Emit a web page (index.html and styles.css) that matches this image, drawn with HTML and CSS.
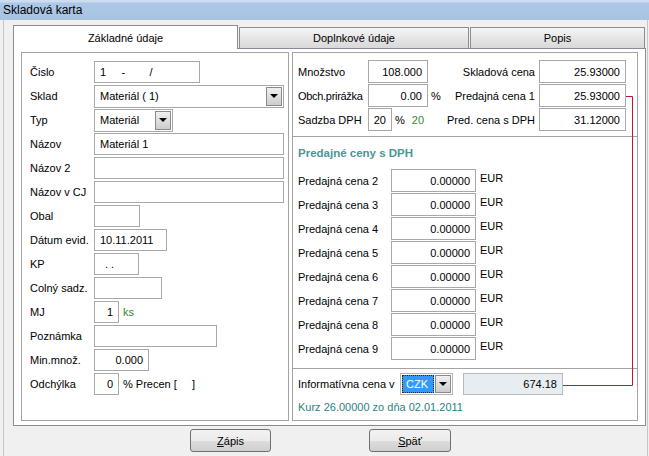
FILE: index.html
```html
<!DOCTYPE html>
<html>
<head>
<meta charset="utf-8">
<link rel="stylesheet" href="styles.css">
</head>
<body>
<div class="title">Skladová karta</div>
<div class="main">
  <div class="tabs">
    <div class="tab active t1">Základné údaje</div>
    <div class="tab t2">Doplnkové údaje</div>
    <div class="tab t3">Popis</div>
  </div>
  <div class="panel">
    <div class="box left">
      <div class="row"><span class="lbl">Čislo</span><div class="fld w105">1     -        /</div></div>
      <div class="row"><span class="lbl">Sklad</span><div class="combo w190"><span>Materiál ( 1)</span><span class="ddb"></span></div></div>
      <div class="row"><span class="lbl">Typ</span><div class="combo w79"><span>Materiál</span><span class="ddb"></span></div></div>
      <div class="row"><span class="lbl">Názov</span><div class="fld w190">Materiál 1</div></div>
      <div class="row"><span class="lbl">Názov 2</span><div class="fld w190"></div></div>
      <div class="row"><span class="lbl">Názov v CJ</span><div class="fld w190"></div></div>
      <div class="row"><span class="lbl">Obal</span><div class="fld w46"></div></div>
      <div class="row"><span class="lbl">Dátum evid.</span><div class="fld w73">10.11.2011</div></div>
      <div class="row"><span class="lbl">KP</span><div class="fld w45 kp">. .</div></div>
      <div class="row"><span class="lbl">Colný sadz.</span><div class="fld w68"></div></div>
      <div class="row"><span class="lbl">MJ</span><div class="fld w25 num">1</div><span class="green after">ks</span></div>
      <div class="row"><span class="lbl">Poznámka</span><div class="fld w123"></div></div>
      <div class="row"><span class="lbl">Min.množ.</span><div class="fld w55 num">0.000</div></div>
      <div class="row"><span class="lbl">Odchýlka</span><div class="fld w25 num">0</div><span class="after pre">% Precen [     ]</span></div>
    </div>
    <div class="box right">
      <div class="top">
        <div class="rrow"><span class="rl">Množstvo</span><div class="fld f60 num h23">108.000</div><span class="rlab">Skladová cena</span><div class="fld f87 num h23">25.93000</div></div>
        <div class="rrow"><span class="rl tight">Obch.prirážka</span><div class="fld f60 num h23">0.00</div><span class="pct">%</span><span class="rlab">Predajná cena 1</span><div class="fld f87 num h23">25.93000</div></div>
        <div class="rrow"><span class="rl">Sadzba DPH</span><div class="fld f24 num h23">20</div><span class="pct2">%</span><span class="green g20">20</span><span class="rlab">Pred. cena s DPH</span><div class="fld f87 num h23">31.12000</div></div>
      </div>
      <div class="mid">
        <div class="head">Predajné ceny s DPH</div>
        <div class="rows">
          <div class="prow"><span class="pl">Predajná cena 2</span><div class="fld f85 num h23">0.00000</div><span class="eur">EUR</span></div>
          <div class="prow"><span class="pl">Predajná cena 3</span><div class="fld f85 num h23">0.00000</div><span class="eur">EUR</span></div>
          <div class="prow"><span class="pl">Predajná cena 4</span><div class="fld f85 num h23">0.00000</div><span class="eur">EUR</span></div>
          <div class="prow"><span class="pl">Predajná cena 5</span><div class="fld f85 num h23">0.00000</div><span class="eur">EUR</span></div>
          <div class="prow"><span class="pl">Predajná cena 6</span><div class="fld f85 num h23">0.00000</div><span class="eur">EUR</span></div>
          <div class="prow"><span class="pl">Predajná cena 7</span><div class="fld f85 num h23">0.00000</div><span class="eur">EUR</span></div>
          <div class="prow"><span class="pl">Predajná cena 8</span><div class="fld f85 num h23">0.00000</div><span class="eur">EUR</span></div>
          <div class="prow"><span class="pl">Predajná cena 9</span><div class="fld f85 num h23">0.00000</div><span class="eur">EUR</span></div>
        </div>
      </div>
      <div class="bot">
        <div class="irow"><span class="il">Informatívna cena v</span><div class="cz"><span class="sel">CZK</span><span class="ddb"></span></div><div class="fld info num">674.18</div></div>
        <div class="kurz">Kurz 26.00000 zo dňa 02.01.2011</div>
      </div>
      <svg class="link" width="80" height="300" viewBox="0 0 80 300"><polyline points="70,3.5 76.5,3.5 76.5,292.5 7,292.5" fill="none" stroke="#c0123a" stroke-width="1"/></svg>
    </div>
  </div>
  <div class="btns">
    <div class="btn b1"><span><u>Z</u>ápis</span></div>
    <div class="btn b2"><span><u>S</u>päť</span></div>
  </div>
</div>
</body>
</html>
```
FILE: styles.css
```css
* { box-sizing: border-box; }
html, body { margin: 0; padding: 0; }
body {
  width: 649px; height: 456px; overflow: hidden;
  background: #f0f0f0;
  font-family: "Liberation Sans", Arial, sans-serif;
  font-size: 11px; color: #000;
}
.title {
  height: 20px; line-height: 21px; padding-left: 3px; font-size: 12px;
  background: linear-gradient(#cddcf0 0, #cddcf0 2px, #adc7e6 3px, #a7c3e4 100%);
}
.main {
  margin-left: 3px; width: 645px; height: 436px;
  border-left: 1px solid #c6c6c6; border-right: 1px solid #c6c6c6;
  padding: 5px 0 0 9px;
}
.tabs { display: flex; align-items: flex-end; height: 24px; margin-bottom: -1px; }
.tab {
  height: 21px; margin-bottom: 1px;
  border: 1px solid #8d8d8d; border-bottom: none;
  background: linear-gradient(#f5f5f5, #d8d8d8);
  display: flex; align-items: center; justify-content: center;
}
.tab.active {
  position: relative; z-index: 1;
  height: 24px; margin-bottom: 0; background: #fff; border-color: #898c95;
}
.t1 { width: 225px; }
.t2 { margin-left: 1px; width: 230px; }
.t3 { margin-left: 1px; width: 175px; }
.panel {
  width: 633px; height: 378px;
  border: 1px solid #898c95; background: #fff;
  display: flex; gap: 3px; padding: 3px 7px 4px 7px;
}
.box { border: 1px solid #a3a3a3; background: #fff; }
.left { width: 268px; padding: 7px 0 0 8px; }
.right { width: 346px; position: relative; }

.row { display: flex; align-items: center; height: 24px; }
.lbl { width: 64px; }
.fld {
  height: 22px; border: 1px solid #a8a8a8; background: #fff;
  padding: 0 5px; display: flex; align-items: center; white-space: pre;
}
.num { justify-content: flex-end; }
.h23 { height: 23px; }
.kp { padding-left: 10px; }
.w105 { width: 106px; } .w190 { width: 190px; } .w79 { width: 79px; }
.w46 { width: 46px; } .w73 { width: 73px; } .w45 { width: 45px; }
.w68 { width: 68px; } .w25 { width: 25px; } .w123 { width: 123px; }
.w55 { width: 55px; }
.after { margin-left: 4px; }
.pre { white-space: pre; }
.green { color: #2f8a2f; }

.combo {
  display: flex; align-items: center; justify-content: space-between;
  height: 23px; border: 1px solid #a8a8a8; padding: 1px 1px 1px 5px;
}
.ddb {
  width: 16px; height: 19px; border: 1px solid #8a8a8a;
  background: linear-gradient(#f0f0f0, #cdcdcd);
  display: flex; align-items: center; justify-content: center;
}
.ddb::after {
  content: ""; border-left: 4px solid transparent; border-right: 4px solid transparent;
  border-top: 4px solid #000;
}

.top { padding: 7px 11px 5px 5px; border-bottom: 1px solid #a3a3a3; display: flex; flex-direction: column; gap: 1px; }
.rrow { display: flex; align-items: center; height: 23px; }
.rl { width: 70px; }
.tight { letter-spacing: -0.3px; }
.f60 { width: 60px; } .f87 { width: 87px; } .f24 { width: 24px; } .f85 { width: 85px; }
.rlab { margin-left: auto; padding-right: 4px; }
.pct { margin-left: 3px; }
.pct2 { margin-left: 3px; }
.g20 { margin-left: 7px; }

.mid { padding: 9px 0 8px 5px; border-bottom: 1px solid #a3a3a3; }
.head { font-weight: bold; color: #4a9696; font-size: 11.5px; line-height: 14px; height: 14px; margin-bottom: 9px; }
.rows { display: flex; flex-direction: column; gap: 1px; }
.prow { display: flex; align-items: center; height: 23px; }
.pl { width: 93px; }
.eur { margin-left: 4px; align-self: flex-start; line-height: 19px; }

.bot { padding: 4px 0 0 5px; }
.irow { display: flex; align-items: center; height: 22px; }
.il { width: 102px; }
.cz {
  width: 53px; height: 22px; border: 1px solid #b4b4b4;
  display: flex; align-items: center; padding: 1px; gap: 1px;
}
.sel {
  flex: 1; height: 18px; background: #3399ff; color: #fff;
  border: 1px dotted #222; padding-left: 3px; line-height: 16px;
}
.cz .ddb { height: 18px; }
.info { width: 100px; margin-left: 10px; background: #e8edf2; border-color: #b3bcc6; }
.kurz { margin-top: 6px; line-height: 12px; color: #2f7f80; }
.link { position: absolute; left: 263px; top: 40px; }

.btns { display: flex; gap: 98px; padding-left: 177px; margin-top: 3px; }
.btn {
  width: 81px; height: 23px; border: 1px solid #707070; border-radius: 3px;
  background: linear-gradient(#f2f2f2 0, #ebebeb 50%, #dddddd 50%, #cfcfcf 100%);
  display: flex; align-items: center; justify-content: center;
}
.b2 { width: 82px; }
```
